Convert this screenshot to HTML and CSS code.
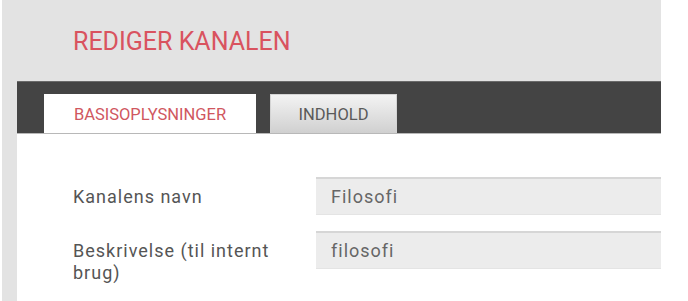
FILE: index.html
```html
<!DOCTYPE html>
<html lang="da">
<head>
<meta charset="UTF-8">
<meta name="viewport" content="width=device-width, initial-scale=1.0">
<title>Rediger kanalen</title>
<link rel="stylesheet" href="styles.css">
</head>
<body>

<div class="page">
    <div class="page-header">
        <h1 class="page-title">REDIGER KANALEN</h1>
    </div>

    <div class="tabbar">
        <div class="tab active">BASISOPLYSNINGER</div>
        <div class="tab">INDHOLD</div>
    </div>

    <div class="content">
        <div class="form-row">
            <label class="form-label" for="navn">Kanalens navn</label>
            <input class="form-input" id="navn" type="text" value="Filosofi">
        </div>
        <div class="form-row">
            <label class="form-label" for="beskrivelse">Beskrivelse (til internt brug)</label>
            <input class="form-input" id="beskrivelse" type="text" value="filosofi">
        </div>
    </div>
</div>

</body>
</html>
```

FILE: styles.css
```css
body {
    margin: 0;
    padding: 0;
    background-color: #fff;
    font-family: Roboto, "Liberation Sans", sans-serif;
}

.page {
    margin-left: 2px;
    width: 644px;
    height: 301px;
    padding-left: 15px;
    background-color: #e3e3e3;
    display: flex;
    flex-direction: column;
}

.page-header {
    height: 81px;
    padding-left: 56px;
}

.page-title {
    margin: 0;
    padding-top: 27px;
    font-size: 25px;
    font-weight: 400;
    color: #d9535f;
}

.tabbar {
    height: 51px;
    border-top: 1px solid #6a6a6a;
    border-bottom: 1px solid #b8b8b8;
    background-color: #444;
    display: flex;
    align-items: flex-end;
    gap: 14px;
    padding-left: 27px;
}

.tab {
    height: 39px;
    box-sizing: border-box;
    display: flex;
    align-items: center;
    justify-content: center;
    font-size: 16.5px;
    color: #5a5a5a;
    width: 127px;
    border: 1px solid #d4d4d4;
    border-bottom: none;
    background: linear-gradient(#f3f3f3, #d0d0d0);
}

.tab.active {
    width: 212px;
    color: #d0575f;
    background: #fff;
    border-color: #fff;
}

.content {
    flex: 1;
    background-color: #fff;
    padding: 43px 0 0 56px;
}

.form-row {
    display: flex;
    align-items: flex-start;
    margin-bottom: 16px;
}

.form-label {
    width: 243px;
    padding-right: 30px;
    box-sizing: border-box;
    padding-top: 9px;
    font-size: 18px;
    line-height: 22px;
    letter-spacing: 1px;
    color: #555;
}

.form-input {
    flex: 1;
    height: 38px;
    box-sizing: border-box;
    border: none;
    border-top: 2px solid #d6d6d6;
    border-bottom: 1px solid #e4e4e4;
    background-color: #ececec;
    padding: 0 15px;
    font-family: inherit;
    font-size: 18px;
    letter-spacing: 1px;
    color: #666;
    outline: none;
}
```
